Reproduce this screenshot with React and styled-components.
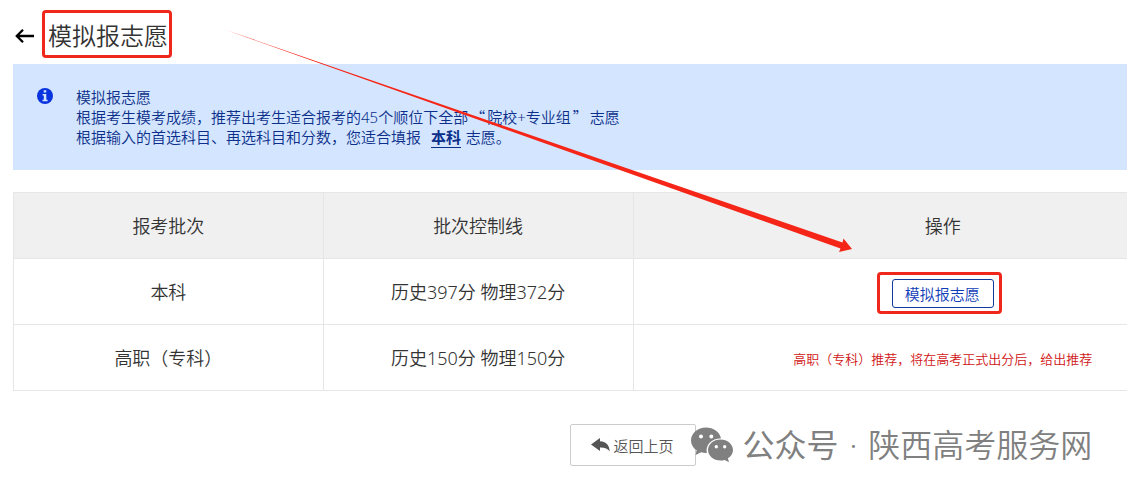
import React from "react";
import styled, { createGlobalStyle } from "styled-components";

const GlobalStyle = createGlobalStyle`
  * {
    box-sizing: border-box;
  }

  body {
    margin: 0;
    background-color: #fff;
    color: #333;
    font-family: "Noto Sans", "Noto Sans CJK SC", sans-serif;
    font-weight: 350;
  }
`;

const Page = styled.main`
  position: relative;
  overflow: hidden;
  padding: 0 0 25px 13px;
`;

const Header = styled.header`
  display: flex;
  align-items: center;
  gap: 13px;
  height: 64px;
  padding-top: 8px;
`;

const BackLink = styled.a`
  display: flex;
  width: 22px;
  color: #000;
`;

const Title = styled.h1`
  position: relative;
  margin: 0;
  font-size: 24px;
  font-weight: inherit;
  line-height: 32px;
`;

const Marker = styled.span`
  position: absolute;
  inset: ${(props) => props.$inset};
  border: 3px solid #f0281c;
  border-radius: 4px;
  pointer-events: none;
`;

/* the sheet is wider than the window and runs off its right edge */
const Sheet = styled.div`
  margin-right: -126px;
`;

const Notice = styled.section`
  display: flex;
  gap: 23px;
  padding: 23px 24px;
  background-color: #d4e6ff;
  color: #0b2f8a;
  font-size: 15px;
  line-height: 20px;

  svg {
    margin-top: 1px;
    color: #0a33e0;
  }

  p {
    margin: 0;
  }
`;

const Quote = styled.span`
  padding: 0 2px;
  font-family: "Noto Sans CJK SC", sans-serif;
`;

const BatchLink = styled.a`
  margin: 0 1px 0 6px;
  border-bottom: 1px solid #0b2f8a;
  color: inherit;
  font-weight: 700;
  text-decoration: none;
`;

const BatchTable = styled.table`
  width: 100%;
  margin-top: 22px;
  border-collapse: collapse;
  table-layout: fixed;
  font-size: 18px;
  line-height: 24px;
  text-align: center;

  th,
  td {
    height: 66px;
    padding: 0;
    border: 1px solid #e6e6e6;
    font-weight: inherit;
  }

  th {
    width: 25%;
    background-color: #f0f0f0;
  }

  th:last-child {
    width: 50%;
  }
`;

const ButtonWrap = styled.div`
  position: relative;
  display: inline-block;
  margin-top: 4px;
  vertical-align: middle;
`;

const FillButton = styled.button`
  display: block;
  height: 29px;
  padding: 0 13px 0 12px;
  border: 1px solid #123a9c;
  border-radius: 3px;
  background-color: #fff;
  color: #0f3cb8;
  font: inherit;
  font-size: 15px;
  line-height: 20px;
`;

const Remark = styled.span`
  color: #d01414;
  font-size: 13px;
`;

const Footer = styled.footer`
  display: flex;
  justify-content: center;
  padding-top: 33px;
`;

const ReturnWrap = styled.div`
  position: relative;
`;

const ReturnButton = styled.button`
  display: flex;
  align-items: center;
  justify-content: center;
  gap: 3px;
  height: 42px;
  padding: 0 21px 0 20px;
  border: 1px solid #ccc;
  border-radius: 2px;
  background-color: #fff;
  color: #555;
  font: inherit;
  font-size: 15px;
`;

const Watermark = styled.div`
  position: absolute;
  top: 0;
  left: 121px;
  display: flex;
  align-items: center;
  gap: 8px;
  height: 42px;
  color: #808080;
  font-size: 32px;
  line-height: 40px;
  white-space: nowrap;
`;

const Account = styled.span`
  display: flex;
  gap: 11px;

  b {
    font-weight: 400;
  }
`;

const Arrow = styled.svg`
  position: absolute;
  top: 0;
  left: 0;
  pointer-events: none;
`;

const BackIcon = () => (
  <svg width="22" height="16" viewBox="0 0 22 16" fill="none">
    <path
      d="M10 1.8 3.8 8l6.200 6.200M3.800 8H21"
      stroke="currentColor"
      strokeWidth="2.3"
    />
  </svg>
);

const InfoIcon = () => (
  <svg width="16" height="16" viewBox="0 0 16 16" aria-hidden="true">
    <circle cx="8" cy="8" r="8" fill="currentColor" />
    <path
      fill="#d4e6ff"
      d="M6.700 2.300h2.600v2.300H6.700ZM5.600 5.900h3.700v5.800h1.300v1.500H5.500v-1.500h1.300V7.400H5.600Z"
    />
  </svg>
);

const ReplyIcon = () => (
  <svg width="19" height="14" viewBox="0 0 19 14" aria-hidden="true">
    <path
      fill="currentColor"
      d="M0 6.500 9 0v3.300c6 .2 9.500 4 9.700 10.200C16.800 10.600 14 9.400 9 9.500V13Z"
    />
  </svg>
);

const WechatIcon = () => (
  <svg width="43" height="36" viewBox="0 0 43 36" aria-hidden="true">
    <path
      fill="currentColor"
      fillRule="evenodd"
      d="M15 .5C6.700.5 0 6.200 0 13.500c0 4.200 2.200 7.500 5.600 9.800L4.600 28l5.500-2.700c1.700.4 3.200.7 4.900.7h.9C14 18.500 20.500 11.500 30 11.300 28.500 4.800 22.500.5 15 .5Zm-5 6.900a2 2 0 1 1 0 4 2 2 0 0 1 0-4Zm10.300 0a2 2 0 1 1 0 4 2 2 0 0 1 0-4Z"
    />
    <path
      fill="currentColor"
      fillRule="evenodd"
      d="M29.500 12.500C22.600 12.500 17 17.200 17 23s5.600 10.500 12.500 10.500c1.500 0 2.900-.2 4.200-.6l4.300 2.300-1.100-3.900c3.100-1.900 5.100-4.900 5.100-8.300 0-5.800-5.600-10.500-12.500-10.500Zm-4.200 5.600a1.700 1.700 0 1 1 0 3.400 1.700 1.700 0 0 1 0-3.400Zm8.400 0a1.700 1.700 0 1 1 0 3.400 1.700 1.700 0 0 1 0-3.400Z"
    />
  </svg>
);

const rows = [
  { batch: "本科", line: "历史397分 物理372分", open: true },
  {
    batch: "高职（专科）",
    line: "历史150分 物理150分",
    remark: "高职（专科）推荐，将在高考正式出分后，给出推荐",
  },
];

const App = () => {
  return (
    <Page>
      <GlobalStyle />
      <Header>
        <BackLink href="#back" aria-label="返回">
          <BackIcon />
        </BackLink>
        <Title>
          模拟报志愿
          <Marker $inset="-10px -4px -6px -6px" />
        </Title>
      </Header>
      <Sheet>
        <Notice>
          <InfoIcon />
          <div>
            <p>模拟报志愿</p>
            <p>
              根据考生模考成绩，推荐出考生适合报考的45个顺位下全部
              <Quote>“</Quote>院校+专业组<Quote>”</Quote>志愿
            </p>
            <p>
              根据输入的首选科目、再选科目和分数，您适合填报{" "}
              <BatchLink href="#batch">本科</BatchLink> 志愿。
            </p>
          </div>
        </Notice>
        <BatchTable>
          <thead>
            <tr>
              <th scope="col">报考批次</th>
              <th scope="col">批次控制线</th>
              <th scope="col">操作</th>
            </tr>
          </thead>
          <tbody>
            {rows.map((row) => (
              <tr key={row.batch}>
                <td>{row.batch}</td>
                <td>{row.line}</td>
                <td>
                  {row.open ? (
                    <ButtonWrap>
                      <FillButton type="button">模拟报志愿</FillButton>
                      <Marker $inset="-7px -8px -6px -15px" />
                    </ButtonWrap>
                  ) : (
                    <Remark>{row.remark}</Remark>
                  )}
                </td>
              </tr>
            ))}
          </tbody>
        </BatchTable>
        <Footer>
          <ReturnWrap>
            <ReturnButton type="button">
              <ReplyIcon />
              返回上页
            </ReturnButton>
            <Watermark>
              <WechatIcon />
              <Account>
                <b>公众号</b>
                <span>·</span>
                <span>陕西高考服务网</span>
              </Account>
            </Watermark>
          </ReturnWrap>
        </Footer>
      </Sheet>
      <Arrow width="860" height="260" viewBox="0 0 860 260" aria-hidden="true">
        <path
          fill="#f52618"
          d="M226 30 842.500 242.500 843.500 238.500 852 249 839 252 840.500 248.500Z"
        />
      </Arrow>
    </Page>
  );
};

export default App;
